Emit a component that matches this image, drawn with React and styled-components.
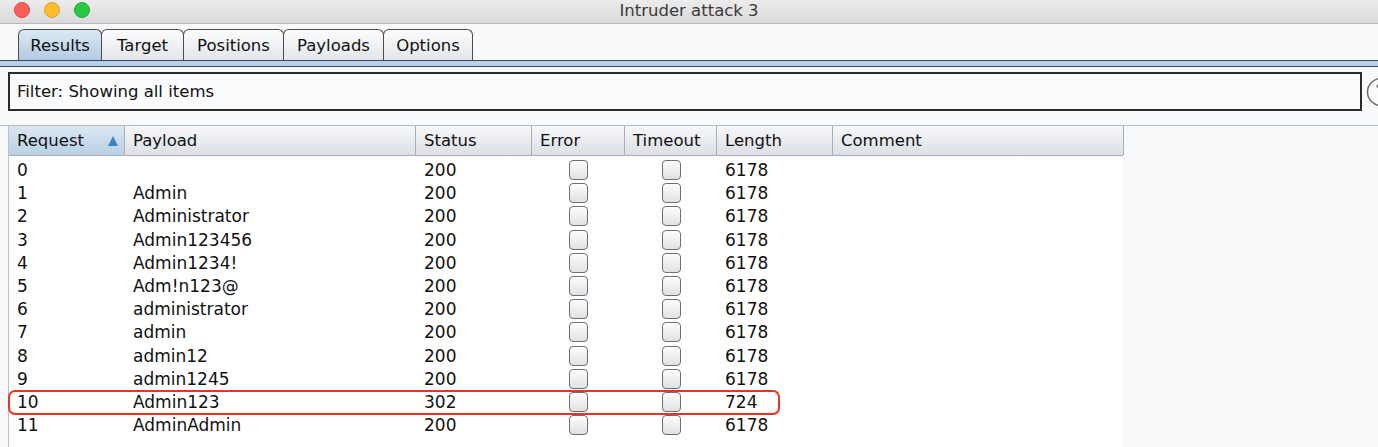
import React from 'react';
import styled, { createGlobalStyle } from 'styled-components';

const GlobalStyle = createGlobalStyle`
  html, body {
    margin: 0;
    padding: 0;
    background: #f8f9fb;
    overflow: hidden;
  }
  * { box-sizing: border-box; }
`;

const tabs = [
  { name: 'Results', width: 84 },
  { name: 'Target', width: 83 },
  { name: 'Positions', width: 101 },
  { name: 'Payloads', width: 101 },
  { name: 'Options', width: 90 },
];

const columns = [
  { name: 'Request', width: 116, sorted: true },
  { name: 'Payload', width: 291 },
  { name: 'Status', width: 116 },
  { name: 'Error', width: 93 },
  { name: 'Timeout', width: 92 },
  { name: 'Length', width: 116 },
  { name: 'Comment', width: 291 },
];

const rows = [
  ['0', '', '200', '6178'],
  ['1', 'Admin', '200', '6178'],
  ['2', 'Administrator', '200', '6178'],
  ['3', 'Admin123456', '200', '6178'],
  ['4', 'Admin1234!', '200', '6178'],
  ['5', 'Adm!n123@', '200', '6178'],
  ['6', 'administrator', '200', '6178'],
  ['7', 'admin', '200', '6178'],
  ['8', 'admin12', '200', '6178'],
  ['9', 'admin1245', '200', '6178'],
  ['10', 'Admin123', '302', '724'],
  ['11', 'AdminAdmin', '200', '6178'],
];

const gridCols = columns.map(c => `${c.width}px`).join(' ');

export default function App() {
  return (
    <>
      <GlobalStyle />
      <Window>
        <TitleBar>
          <Lights>
            <Light color="#fc5f57" edge="#de4a42" />
            <Light color="#fdbc2e" edge="#dea125" />
            <Light color="#28c840" edge="#1eaa32" />
          </Lights>
          <Title>Intruder attack 3</Title>
        </TitleBar>

        <TabStrip>
          {tabs.map((t, i) => (
            <Tab key={t.name} w={t.width} active={i === 0}>{t.name}</Tab>
          ))}
        </TabStrip>
        <TabRule />

        <FilterRow>
          <FilterBox>Filter: Showing all items</FilterBox>
          <HelpIcon width="30" height="30" viewBox="0 0 30 30">
            <circle cx="15" cy="15" r="13.5" fill="#fbfbfb" stroke="#6f6f6f" strokeWidth="1.5" />
            <path d="M11 10.5 Q11.5 7 15 7 Q18.5 7 18.5 10.5" fill="none" stroke="#6f6f6f" strokeWidth="1.6" />
          </HelpIcon>
        </FilterRow>

        <TablePane>
          <Table>
            <HeaderRow>
              {columns.map(c => (
                <HeaderCell key={c.name} active={c.sorted}>
                  {c.name}
                  {c.sorted && <SortArrow />}
                </HeaderCell>
              ))}
            </HeaderRow>
            <Body>
              {rows.map(r => (
                <Row key={r[0]}>
                  <Cell>{r[0]}</Cell>
                  <Cell>{r[1]}</Cell>
                  <Cell>{r[2]}</Cell>
                  <CheckCell><Check /></CheckCell>
                  <CheckCell><Check /></CheckCell>
                  <Cell>{r[3]}</Cell>
                  <Cell />
                  {r[0] === '10' && <Highlight />}
                </Row>
              ))}
            </Body>
          </Table>
        </TablePane>
      </Window>
    </>
  );
}

const Window = styled.div`
  width: 1378px;
  height: 447px;
  display: flex;
  flex-direction: column;
  font-family: 'DejaVu Sans', 'Noto Sans', sans-serif;
  color: #111;
  overflow: hidden;
`;

const TitleBar = styled.div`
  position: relative;
  height: 24px;
  flex-shrink: 0;
  display: flex;
  align-items: center;
  justify-content: center;
  background: linear-gradient(#ececec, #d9d9d9);
  border-bottom: 1px solid #b9b9b9;
`;

const Lights = styled.div`
  position: absolute;
  left: 14px;
  top: 2px;
  display: flex;
  gap: 14px;
`;

const Light = styled.span`
  width: 16px;
  height: 16px;
  border-radius: 50%;
  background: ${p => p.color};
  border: 1px solid ${p => p.edge};
`;

const Title = styled.div`
  font-size: 16.5px;
  color: #3a3a3a;
  margin-top: -3px;
`;

const TabStrip = styled.div`
  display: flex;
  padding-left: 18px;
  margin-top: 4px;
  height: 32px;
  align-items: flex-end;
`;

const Tab = styled.div`
  width: ${p => p.w}px;
  height: 31px;
  display: flex;
  align-items: center;
  justify-content: center;
  font-size: 16.5px;
  color: #111;
  border: 1px solid #4c4c4c;
  border-bottom: none;
  border-radius: 6px 6px 0 0;
  margin-right: -1px;
  background: ${p => p.active
    ? 'linear-gradient(#dce8f3, #b2cbe2)'
    : 'linear-gradient(#fbfcfd, #e3e6ea)'};
`;

const TabRule = styled.div`
  height: 7px;
  background: #b8d1e8;
  border-top: 1px solid #3e4a58;
  border-bottom: 1px solid #3e4a58;
`;

const FilterRow = styled.div`
  display: flex;
  align-items: center;
  padding: 5px 0 0 8px;
  gap: 4px;
`;

const FilterBox = styled.div`
  width: 1354px;
  flex-shrink: 0;
  height: 39px;
  border: 2px solid #2b2b2b;
  background: #fafbfc;
  display: flex;
  align-items: center;
  padding-left: 7px;
  font-size: 16.5px;
`;

const HelpIcon = styled.svg`
  flex-shrink: 0;
`;

const TablePane = styled.div`
  margin-top: 14px;
  border-top: 1px solid #b6bac0;
  flex: 1;
  padding-left: 8px;
`;

const Table = styled.div`
  width: 1115px;
  background: #fff;
  border-left: 1px solid #bfc3c8;
`;

const HeaderRow = styled.div`
  display: grid;
  grid-template-columns: ${gridCols};
  height: 30px;
  border-bottom: 1px solid #a9aeb4;
`;

const HeaderCell = styled.div`
  position: relative;
  display: flex;
  align-items: center;
  padding-left: 8px;
  font-size: 16.5px;
  border-right: 1px solid #a9aeb4;
  background: ${p => p.active
    ? 'linear-gradient(#dae7f2, #b9d0e4)'
    : 'linear-gradient(#f6f7f9, #dcdfe3)'};
`;

const SortArrow = styled.span`
  position: absolute;
  right: 6px;
  top: 10px;
  width: 0;
  height: 0;
  border-left: 5.5px solid transparent;
  border-right: 5.5px solid transparent;
  border-bottom: 10px solid #3f82c4;
`;

const Body = styled.div`
  padding-top: 2.5px;
  padding-bottom: 10px;
`;

const Row = styled.div`
  position: relative;
  display: grid;
  grid-template-columns: ${gridCols};
  height: 23.2px;
`;

const Cell = styled.div`
  display: flex;
  align-items: center;
  padding-left: 8px;
  font-size: 17px;
  color: #111;
  white-space: nowrap;
`;

const CheckCell = styled.div`
  display: flex;
  align-items: center;
  justify-content: center;
`;

const Check = styled.span`
  width: 19px;
  height: 20px;
  border: 1px solid #6d6f72;
  border-radius: 4px;
  background: linear-gradient(#fdfdfd, #dfe1e4);
  box-shadow: inset 0 1px 0 #fff;
`;

const Highlight = styled.div`
  position: absolute;
  left: -1px;
  top: -0.5px;
  width: 772px;
  height: 25px;
  border: 2.5px solid #ee3220;
  border-radius: 7px;
  pointer-events: none;
`;
